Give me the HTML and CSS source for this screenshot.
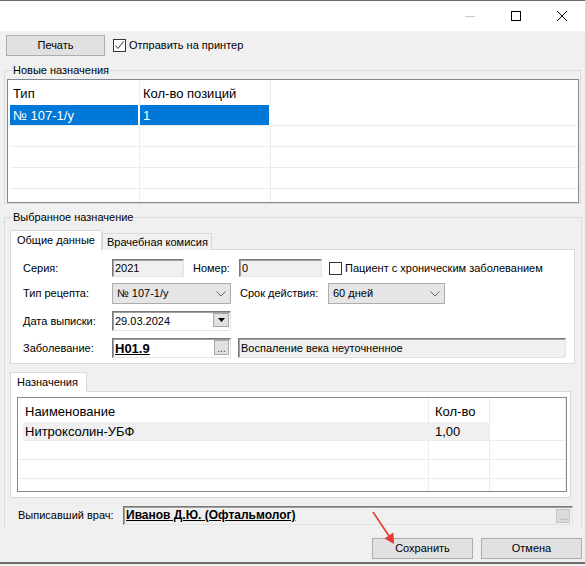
FILE: index.html
```
<!DOCTYPE html>
<html lang="ru">
<head>
<meta charset="utf-8">
<title>Рецепт</title>
<link rel="stylesheet" href="styles.css">
</head>
<body>
<div class="window">
  <div class="titlebar">
    <div class="ctl"><svg width="12" height="12" viewBox="0 0 12 12"><line x1="1" y1="6.5" x2="11" y2="6.5" stroke="#c9c9c9" stroke-width="1"/></svg></div>
    <div class="ctl"><svg width="12" height="12" viewBox="0 0 12 12"><rect x="1.5" y="1.5" width="9" height="9" fill="none" stroke="#000" stroke-width="1"/></svg></div>
    <div class="ctl"><svg width="12" height="12" viewBox="0 0 12 12"><path d="M1 1 L11 11 M11 1 L1 11" stroke="#000" stroke-width="1"/></svg></div>
  </div>
  <div class="client">
    <div class="toolbar">
      <div class="btn btn-print">Печать</div>
      <label class="chk"><span class="box checked"><svg width="11" height="11" viewBox="0 0 11 11"><path d="M1.5 5.5 L4 8.5 L9.5 1.5" fill="none" stroke="#333" stroke-width="1"/></svg></span>Отправить на принтер</label>
    </div>

    <fieldset class="group g1">
      <legend>Новые назначения</legend>
      <div class="grid grid1">
        <div class="row head">
          <div class="c c1">Тип</div><div class="c c2">Кол-во позиций</div><div class="c c3"></div>
        </div>
        <div class="row sel">
          <div class="c c1">№ 107-1/у</div><div class="c c2">1</div><div class="c c3"></div>
        </div>
        <div class="row"><div class="c c1"></div><div class="c c2"></div><div class="c c3"></div></div>
        <div class="row"><div class="c c1"></div><div class="c c2"></div><div class="c c3"></div></div>
        <div class="row"><div class="c c1"></div><div class="c c2"></div><div class="c c3"></div></div>
        <div class="row"><div class="c c1"></div><div class="c c2"></div><div class="c c3"></div></div>
      </div>
    </fieldset>

    <fieldset class="group g2">
      <legend>Выбранное назначение</legend>
      <div class="tabs">
        <div class="tab active">Общие данные</div>
        <div class="tab">Врачебная комисия</div>
      </div>
      <div class="page page1">
        <div class="frow r1">
          <span class="lbl w-lbl">Серия:</span>
          <span class="field ro f-seria">2021</span>
          <span class="lbl w-nom">Номер:</span>
          <span class="field ro f-nomer">0</span>
          <label class="chk chk2"><span class="box"></span>Пациент с хроническим заболеванием</label>
        </div>
        <div class="frow r2">
          <span class="lbl w-lbl">Тип рецепта:</span>
          <span class="combo f-type">№ 107-1/у<svg class="chev" width="10" height="6" viewBox="0 0 10 6"><path d="M0.5 0.5 L5 5 L9.5 0.5" fill="none" stroke="#606060" stroke-width="1"/></svg></span>
          <span class="lbl w-srok">Срок действия:</span>
          <span class="combo f-srok">60 дней<svg class="chev" width="10" height="6" viewBox="0 0 10 6"><path d="M0.5 0.5 L5 5 L9.5 0.5" fill="none" stroke="#606060" stroke-width="1"/></svg></span>
        </div>
        <div class="frow r3">
          <span class="lbl w-lbl">Дата выписки:</span>
          <span class="field wh f-date">29.03.2024<span class="dd"><svg width="7" height="4" viewBox="0 0 7 4"><path d="M0 0 H7 L3.5 4 Z" fill="#000"/></svg></span></span>
        </div>
        <div class="frow r4">
          <span class="lbl w-lbl">Заболевание:</span>
          <span class="field wh f-mkb"><b class="code">H01.9</b><span class="dots">...</span></span>
          <span class="field ro f-diag">Воспаление века неуточненное</span>
        </div>
      </div>

      <div class="tabs tabs2">
        <div class="tab active">Назначения</div>
      </div>
      <div class="page page2">
        <div class="grid grid2">
          <div class="row head">
            <div class="c d1">Наименование</div><div class="c d2">Кол-во</div><div class="c d3"></div>
          </div>
          <div class="row sel2">
            <div class="c d1">Нитроксолин-УБФ</div><div class="c d2">1,00</div><div class="c d3"></div>
          </div>
          <div class="row"><div class="c d1"></div><div class="c d2"></div><div class="c d3"></div></div>
          <div class="row"><div class="c d1"></div><div class="c d2"></div><div class="c d3"></div></div>
          <div class="row"><div class="c d1"></div><div class="c d2"></div><div class="c d3"></div></div>
        </div>
      </div>

      <div class="doctor">
        <span class="lbl w-doc">Выписавший врач:</span>
        <span class="field ro f-doc"><b class="code">Иванов Д.Ю. (Офтальмолог)</b><span class="dots dis">...</span></span>
      </div>
    </fieldset>

    <div class="buttons">
      <div class="btn btn-save">Сохранить</div>
      <div class="btn btn-cancel">Отмена</div>
    </div>
  </div>
  <div class="bottomedge"></div>
  <svg class="arrow" width="30" height="40" viewBox="0 0 30 40">
    <line x1="4" y1="3" x2="22" y2="30" stroke="#e53b35" stroke-width="1.6"/>
    <path d="M25 35 L15.5 29.5 L24.5 23.5 Z" fill="#e53b35"/>
  </svg>
</div>
</body>
</html>
```

FILE: styles.css
```
* { box-sizing: border-box; }
html, body { margin: 0; padding: 0; }
body {
  width: 585px;
  height: 566px;
  overflow: hidden;
  font-family: "Liberation Sans", Arial, sans-serif;
  font-size: 11px;
  color: #000;
  background: #f0f0f0;
}
.window { position: relative; width: 585px; height: 566px; }

.titlebar {
  height: 31px;
  border-top: 1px solid #6a6a6a;
  background: #fff;
  display: flex;
  justify-content: flex-end;
}
.ctl {
  width: 46px;
  height: 30px;
  display: flex;
  align-items: center;
  justify-content: center;
}

.client {
  height: 531px;
  padding: 4px 3px 0 4px;
  display: flex;
  flex-direction: column;
}

.toolbar {
  display: flex;
  align-items: center;
  height: 21px;
  padding-left: 2px;
}
.btn {
  height: 21px;
  background: #e1e1e1;
  border: 1px solid #adadad;
  display: flex;
  align-items: center;
  justify-content: center;
  line-height: 13px;
}
.btn-print { width: 99px; }

.chk { display: flex; align-items: center; line-height: 13px; white-space: nowrap; }
.toolbar .chk { margin-left: 8px; }
.box {
  width: 13px; height: 13px;
  border: 1px solid #333;
  background: #fff;
  margin-right: 3px;
  display: flex; align-items: center; justify-content: center;
}

.group {
  margin: 0;
  border: 1px solid #dcdcdc;
  min-width: 0;
}
.group legend {
  padding: 0 1px;
  line-height: 13px;
  height: 13px;
}
.g1 {
  margin-top: 8px;
  width: 577px;
  padding: 2px 1px 0 2px;
}
.g1 legend { margin-left: 5px; }
.g2 {
  margin-top: 7px;
  width: 578px;
  padding: 6px 6px 3px 5px;
  border-bottom-color: #f0f0f0;
}
.g2 legend { margin-left: 2px; }

/* grids */
.grid {
  background: #fff;
  border: 1px solid #828790;
  overflow: hidden;
  font-size: 13px;
}
.grid1 { height: 124px; padding-left: 2px; }
.row { display: flex; }
.row .c { border-right: 1px solid #ececec; border-bottom: 1px solid #ececec; white-space: nowrap; }
.grid1 .row { height: 21px; }
.grid1 .row.head { height: 25px; }
.grid1 .c { padding-left: 3px; display: flex; align-items: center; }
.grid1 .head .c { border-bottom: none; padding-top: 2px; }
.c1 { width: 130px; }
.c2 { width: 131px; }
.c3 { flex: 1; border-right: none !important; }
.grid1 .sel .c1, .grid1 .sel .c2 {
  background: #0078d7;
  color: #fff;
  border-right: 2px solid #fff;
}

/* tabs */
.tabs {
  display: flex;
  align-items: flex-end;
  height: 20px;
  margin-bottom: -1px;
  position: relative;
  z-index: 1;
}
.tab {
  height: 17px;
  border: 1px solid #d9d9d9;
  border-bottom: none;
  padding: 0 4px;
  display: flex;
  align-items: center;
  background: #f0f0f0;
  line-height: 13px;
  white-space: nowrap;
}
.tab.active {
  height: 20px;
  background: #fff;
  padding: 3px 6px 0 6px;
  align-items: flex-start;
}
.tabs .tab:first-child { width: 92px; }
.tabs .tab:nth-child(2) { width: 110px; }
.tabs2 { margin-top: 8px; }
.tabs2 .tab.active { width: 77px; }

.page {
  background: #fff;
  border: 1px solid #d9d9d9;
}
.page1 {
  height: 115px;
  width: 565px;
  padding: 9px 0 0 12px;
}
.page2 {
  height: 107px;
  width: 561px;
  padding: 5px 3px 5px 6px;
}

.frow { display: flex; align-items: center; }
.r1 { height: 18px; }
.r2 { height: 21px; margin-top: 6px; }
.r3 { height: 20px; margin-top: 7px; }
.r4 { height: 20px; margin-top: 7px; }
.lbl { line-height: 13px; white-space: nowrap; }
.w-lbl { width: 89px; }
.w-nom { width: 46px; margin-left: 9px; }
.w-srok { width: 88px; margin-left: 9px; }

.field {
  height: 100%;
  display: flex;
  align-items: center;
  padding-left: 2px;
  border: 1px solid;
  border-color: #7a7a7a #e3e3e3 #e3e3e3 #7a7a7a;
  box-shadow: inset 1px 1px 0 #a0a0a0;
  line-height: 13px;
  position: relative;
  white-space: nowrap;
}
.ro { background: #f0f0f0; }
.wh { background: #fff; }
.f-seria { width: 72px; }
.f-nomer { width: 83px; }
.chk2 { margin-left: 7px; }
.f-date { width: 119px; }
.f-mkb { width: 119px; }
.f-diag { width: 328px; margin-left: 7px; }

.combo {
  height: 21px;
  display: flex;
  align-items: center;
  background: #e5e5e5;
  border: 1px solid #adadad;
  padding-left: 4px;
  position: relative;
  line-height: 13px;
}
.f-type { width: 119px; }
.f-srok { width: 117px; }
.chev { position: absolute; right: 4px; top: 7px; }

.dd {
  position: absolute;
  right: 1px; top: 1px;
  width: 16px; height: 14px;
  background: #e1e1e1;
  border: 1px solid #a6a6a6;
  display: flex; align-items: center; justify-content: center;
}
.code {
  font-weight: bold;
  text-decoration: underline;
  font-size: 12px;
}
.f-mkb .code { font-size: 13px; }
.dots {
  position: absolute;
  right: 1px; top: 1px;
  width: 15px; height: 15px;
  background: #e1e1e1;
  border: 1px solid #adadad;
  display: flex; align-items: flex-end; justify-content: center;
  font-size: 10px;
  line-height: 11px;
  color: #333;
}
.dots.dis { width: 14px; height: 14px; top: 2px; right: 2px; color: #999; background: #dcdcdc; border-color: #c4c4c4; }

.grid2 { height: 95px; padding-left: 1px; }
.grid2 .row { height: 19px; }
.grid2 .row.head { height: 24px; }
.grid2 .c { padding-left: 6px; display: flex; align-items: center; }
.grid2 .head .c { border-bottom: none; padding-top: 3px; }
.d1 { width: 410px; }
.d2 { width: 61px; }
.d3 { flex: 1; }
.grid2 .sel2 .d1, .grid2 .sel2 .d2 { background: #f0f0f0; }
.grid2 .sel2 .d1 { margin-left: 4px; width: 406px; padding-left: 2px; }

.doctor {
  display: flex;
  align-items: center;
  height: 19px;
  margin-top: 8px;
  padding-left: 8px;
}
.w-doc { width: 105px; }
.f-doc { width: 450px; }

.buttons {
  display: flex;
  justify-content: flex-end;
  gap: 8px;
  margin-top: 9px;
}
.btn-save, .btn-cancel { width: 101px; }

.bottomedge {
  position: absolute;
  left: 0; right: 0; bottom: 2px;
  height: 2px;
  background: #6f6f6f;
}
.arrow {
  position: absolute;
  left: 369px;
  top: 509px;
}
```
